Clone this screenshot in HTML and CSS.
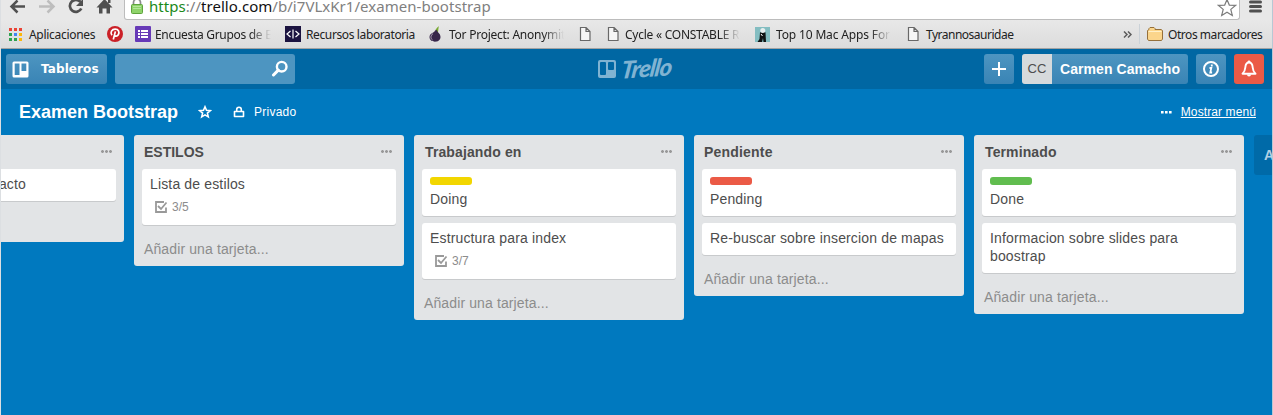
FILE: index.html
```html
<!DOCTYPE html>
<html lang="es">
<head>
<meta charset="utf-8">
<title>Examen Bootstrap | Trello</title>
<link rel="stylesheet" href="styles.css">
</head>
<body>
<div class="window">
  <div class="toolbar">
    <svg class="nav-icons" width="123" height="20" viewBox="0 0 123 20">
      <path d="M12.500 6.500h12.500M17.500 0.500l-6 6 6 6" fill="none" stroke="#505050" stroke-width="2.500"/>
      <path d="M39 6.500h14M47.500 0.500l6 6-6 6" fill="none" stroke="#bdbdbd" stroke-width="2.500"/>
      <path d="M80.500 2a6 6 0 1 0 .8 6.500" fill="none" stroke="#505050" stroke-width="2.700"/>
      <path d="M83 -1v7h-7z" fill="#505050"/>
      <path d="M104.500 -1l8 8.500h-2.500v6h-3.500v-5h-4v5h-3.500v-6h-2.500zM108 -1h2.500v4h-2.500z" fill="#505050"/>
    </svg>
    <div class="omnibox">
      <svg class="lock" width="12" height="14" viewBox="0 0 12 14">
        <path d="M2.500 5V2.500a3.500 3.500 0 0 1 7 0V5" fill="none" stroke="#8b8b8b" stroke-width="1.700"/>
        <rect x=".5" y="4.500" width="11" height="9" rx="1" fill="#8ed36a" stroke="#5fa33c"/>
        <path d="M2 6.500h8M2 8.500h8" stroke="#b4e79a"/>
      </svg>
      <div class="url"><span class="scheme">https</span>://<span class="host">trello.com</span>/b/i7VLxKr1/examen-bootstrap</div>
      <svg class="fav" width="20" height="18" viewBox="0 0 20 18">
        <path d="M10 .5l2.300 5.600 6.200.3-4.700 4 1.500 6L10 13.200 4.700 16.400l1.500-6-4.700-4 6.200-.3z" fill="#fff" stroke="#7c7c7c" stroke-width="1.200"/>
      </svg>
    </div>
    <svg class="menu" width="13" height="15" viewBox="0 0 13 15"><path d="M1.500 3h10M1.500 7.500h10M1.500 12h10" stroke="#505050" stroke-width="3" stroke-linecap="round"/></svg>
  </div>

  <div class="bookmarks">
    <div class="bm apps">
      <svg width="13" height="13" viewBox="0 0 13 13"><path d="M0 0h3v3H0zM5 0h3v3H5zM10 0h3v3h-3z" fill="#ea4335"/><path d="M0 5h3v3H0zM0 10h3v3H0zM5 10h3v3H5z" fill="#2da14f"/><path d="M5 5h3v3H5z" fill="#4285f4"/><path d="M10 5h3v3h-3zM10 10h3v3h-3z" fill="#fbb80a"/></svg>
      <span>Aplicaciones</span>
    </div>
    <div class="bm">
      <svg width="16" height="16" viewBox="0 0 16 16"><circle cx="8" cy="8" r="8" fill="#cb2027"/><path d="M4.900 9.200C2.700 6.300 5 3.200 8.100 3.200c3.500 0 4.700 3 3.200 5.500-1.200 2-3.200 1.600-3.700.3M8.400 5.400L6.300 13.500" fill="none" stroke="#fff" stroke-width="1.700"/></svg>
    </div>
    <div class="bm form">
      <svg width="16" height="16" viewBox="0 0 16 16"><rect width="16" height="16" rx="1" fill="#673ab7"/><path d="M3 4h2v2H3zM3 7h2v2H3zM3 10h2v2H3zM6 4h7v2H6zM6 7h7v2H6zM6 10h7v2H6z" fill="#fff"/></svg>
      <span class="clip w-form">Encuesta Grupos de Es</span>
    </div>
    <div class="bm rec">
      <svg width="16" height="16" viewBox="0 0 16 16"><path fill="#1b1340" d="M0 0h16v16H0z"/><path d="M5.500 5L2 8l3.500 3M10.500 5L14 8l-3.500 3M8 3.500v9" fill="none" stroke="#fff" stroke-width="1.200"/></svg>
      <span>Recursos laboratoria</span>
    </div>
    <div class="bm tor">
      <svg width="15" height="16" viewBox="0 0 15 16"><path d="M7.500 6C7 3 9 2 11 0c-.7 2-.6 4-1 6" fill="#78a832"/><path d="M7 4.500c0 2-5.500 2.500-5.500 6.500 0 3 2.500 4.700 5.500 4.700s5.500-1.700 5.500-4.700C12.500 7 9 6.500 9 4z" fill="#37264a"/><path d="M5 7.500c-2.500 2-2.800 4.800-.5 6.500" fill="none" stroke="#b2a8bb"/></svg>
      <span class="clip w-tor">Tor Project: Anonymity</span>
    </div>
    <div class="bm"><svg width="12" height="14" viewBox="0 0 12 14"><path d="M1.500.500h5.500l4 4v9h-9.500zM7 .5v4h4" fill="#f7f7f7" stroke="#686868" stroke-width="1.200"/></svg></div>
    <div class="bm cycle">
      <svg width="12" height="14" viewBox="0 0 12 14"><path d="M1.500.500h5.500l4 4v9h-9.500zM7 .5v4h4" fill="#f7f7f7" stroke="#686868" stroke-width="1.200"/></svg>
      <span class="clip w-cycle">Cycle « CONSTABLE RO</span>
    </div>
    <div class="bm mac">
      <svg width="15" height="15" viewBox="0 0 15 15"><path fill="#83bdc1" d="M0 0h15v15H0z"/><path d="M5 5.500c1.500-1.500 5-1.500 5.500 0L11 15H8.500l-.5-4-1 4H2.500l2-3z" fill="#101414"/><circle cx="7.800" cy="3.500" r="2.500" fill="#e6eeee"/><path d="M6 7l1.500 2" stroke="#fff"/></svg>
      <span class="clip w-mac">Top 10 Mac Apps For M</span>
    </div>
    <div class="bm tyr">
      <svg width="12" height="14" viewBox="0 0 12 14"><path d="M1.500.500h5.500l4 4v9h-9.500zM7 .5v4h4" fill="#f7f7f7" stroke="#686868" stroke-width="1.200"/></svg>
      <span>Tyrannosauridae</span>
    </div>
    <div class="bm"><svg width="9" height="7" viewBox="0 0 9 7"><path d="M1 .5l3 3-3 3M5 .5l3 3-3 3" fill="none" stroke="#5c5c5c" stroke-width="1.500"/></svg></div>
    <div class="bm others">
      <svg width="16" height="14" viewBox="0 0 16 14"><path d="M.5 12V3.500l1.500-1V1.500L3 .5h4l1 1v1h6l1.500 1V12l-1 1.500h-13z" fill="#fbd58b" stroke="#96703a"/><path d="M1.500 4.500h13" stroke="#fff0c8"/></svg>
      <span>Otros marcadores</span>
    </div>
  </div>

  <div class="header">
    <div class="side">
      <div class="btn boards">
        <svg width="17" height="17" viewBox="0 0 17 17"><path fill-rule="evenodd" d="M2 .5h13a1.500 1.500 0 0 1 1.500 1.500v13a1.500 1.500 0 0 1-1.500 1.500H2A1.500 1.500 0 0 1 .5 15V2A1.500 1.500 0 0 1 2 .5zM2.700 2.500v11.500h4.800V2.500zM9.500 2.500v7.500h4.800V2.500z" fill="#fff"/></svg>
        <span>Tableros</span>
      </div>
      <div class="search">
        <svg width="18" height="17" viewBox="0 0 18 17"><circle cx="10.700" cy="6.700" r="4.800" fill="none" stroke="#fff" stroke-width="2.400"/><path d="M7.300 10.100L2.500 15" stroke="#fff" stroke-width="3" stroke-linecap="round"/></svg>
      </div>
    </div>
    <div class="logo">
      <svg width="18" height="18" viewBox="0 0 18 18"><path fill-rule="evenodd" d="M2 0h14a2 2 0 0 1 2 2v14a2 2 0 0 1-2 2H2a2 2 0 0 1-2-2V2a2 2 0 0 1 2-2zM3 2a1 1 0 0 0-1 1v11a1 1 0 0 0 1 1h4a1 1 0 0 0 1-1V3a1 1 0 0 0-1-1zM11 2a1 1 0 0 0-1 1v6a1 1 0 0 0 1 1h4a1 1 0 0 0 1-1V3a1 1 0 0 0-1-1z" fill="#80b3d2"/></svg>
      <span class="wordmark">Trello</span>
    </div>
    <div class="side right">
      <div class="btn square"><svg width="16" height="16" viewBox="0 0 16 16"><path d="M8 1v14M1 8h14" stroke="#fff" stroke-width="2"/></svg></div>
      <div class="btn member"><span class="initials">CC</span><span class="name">Carmen Camacho</span></div>
      <div class="btn square"><svg width="18" height="18" viewBox="0 0 18 18"><circle cx="9" cy="9" r="7" fill="none" stroke="#fff" stroke-width="2"/><path d="M9.800 4.500v2M7.500 8h1.800l-1 4.500h1.800" fill="none" stroke="#fff" stroke-width="1.800"/></svg></div>
      <div class="btn square alert"><svg width="18" height="18" viewBox="0 0 18 18"><path d="M9 2.500C6.300 2.500 5.500 5 5.300 7.500 5.100 10.500 4.200 12.200 2.500 13.700h13c-1.700-1.500-2.600-3.200-2.800-6.200C12.500 5 11.700 2.500 9 2.500z" fill="none" stroke="#fff" stroke-width="1.900" stroke-linejoin="round"/><circle cx="9" cy="1.800" r="1.400" fill="#fff"/><path d="M7 14.500h4a2 2 0 0 1-4 0z" fill="#fff"/></svg></div>
    </div>
  </div>

  <div class="board-bar">
    <h1>Examen Bootstrap</h1>
    <svg class="star" width="14" height="14" viewBox="0 0 14 14"><path d="M7 1.800l1.500 3.500 3.900.3-3 2.500.9 3.800L7 9.900l-3.300 2 .9-3.800-3-2.500 3.900-.3z" fill="none" stroke="#fff" stroke-width="1.600"/></svg>
    <svg class="priv" width="12" height="12" viewBox="0 0 12 12"><path d="M1.500 5.500h9v5h-9zM3.700 5V3.500a2.300 2.300 0 0 1 4.600 0V5" fill="none" stroke="#fff" stroke-width="1.600" stroke-linejoin="round"/></svg>
    <span class="privacy">Privado</span>
    <svg class="more" width="11" height="3" viewBox="0 0 11 3"><path d="M0 0h2.600v2.600H0zM4 0h2.600v2.600H4zM8 0h2.600v2.600H8z" fill="#fff"/></svg>
    <span class="show">Mostrar menú</span>
  </div>

  <div class="lists">
    <section class="list">
      <header><h2></h2><i class="dots"></i></header>
      <div class="card tail">Formulario de contacto</div>
      <footer></footer>
    </section>
    <section class="list">
      <header><h2 class="caps">ESTILOS</h2><i class="dots"></i></header>
      <div class="card">Lista de estilos
        <div class="badge"><svg width="14" height="14" viewBox="0 0 14 14"><path d="M10 2H2v10h10V7.500" fill="none" stroke="#999" stroke-width="1.800"/><path d="M4 6l3 3 5.500-6.500" fill="none" stroke="#999" stroke-width="1.800"/></svg>3/5</div>
      </div>
      <footer>Añadir una tarjeta...</footer>
    </section>
    <section class="list">
      <header><h2 class="t1">Trabajando en</h2><i class="dots"></i></header>
      <div class="card labeled"><div class="label yellow"></div>Doing</div>
      <div class="card">Estructura para index
        <div class="badge"><svg width="14" height="14" viewBox="0 0 14 14"><path d="M10 2H2v10h10V7.500" fill="none" stroke="#999" stroke-width="1.800"/><path d="M4 6l3 3 5.500-6.500" fill="none" stroke="#999" stroke-width="1.800"/></svg>3/7</div>
      </div>
      <footer>Añadir una tarjeta...</footer>
    </section>
    <section class="list">
      <header><h2>Pendiente</h2><i class="dots"></i></header>
      <div class="card labeled"><div class="label red"></div>Pending</div>
      <div class="card">Re-buscar sobre insercion de mapas</div>
      <footer>Añadir una tarjeta...</footer>
    </section>
    <section class="list">
      <header><h2 class="t1">Terminado</h2><i class="dots"></i></header>
      <div class="card labeled"><div class="label green"></div>Done</div>
      <div class="card">Informacion sobre slides para boostrap</div>
      <footer>Añadir una tarjeta...</footer>
    </section>
    <div class="add-list">Añadir una lista...</div>
  </div>
</div>
</body>
</html>
```
FILE: styles.css
```css
* { box-sizing: border-box; }
html, body { margin: 0; height: 100%; overflow: hidden; }
body { font-family: "Liberation Sans", Arial, sans-serif; font-size: 14px; color: #4d4d4d; }
svg { display: block; flex: none; }
.window { height: 415px; display: flex; flex-direction: column; background: #0079bf; border-left: 1px solid #dcdfe2; border-right: 1px solid #b8c8d4; overflow: hidden; }

.toolbar { height: 20px; flex: none; display: flex; background: #e8e8e8; }
.nav-icons { margin-left: -1px; }
.omnibox { width: 1116px; margin-left: 1px; height: 20px; display: flex; background: #fff; border: 1px solid #bcbcbc; border-top: 0; border-radius: 0 0 3px 3px; font-family: "Noto Sans", "Open Sans", sans-serif; font-size: 15px; color: #808080; }
.lock { margin: 0 0 0 6px; }
.url { margin: -4px 0 0 6px; line-height: 20px; white-space: nowrap; letter-spacing: 0.04px; }
.scheme { color: #1a8a1a; }
.host { color: #111; }
.fav { margin: -1px 2px 0 auto; }
.menu { margin: -1px 0 0 9px; }

.bookmarks { height: 29px; flex: none; padding-left: 8px; display: grid; grid-template-columns: 98px 28px 150px 143px 151px 28px 148px 152px 216px 16px 1fr; align-items: center; background: linear-gradient(#e8e8e8, #dcdcdc); border-bottom: 1px solid #a3a3a3; font-family: "Noto Sans", "Open Sans", sans-serif; font-size: 12px; color: #222; }
.bm { display: flex; align-items: center; height: 28px; white-space: nowrap; letter-spacing: -0.3px; }
.bm svg + span { margin-left: 6px; }
.apps svg + span { margin-left: 7px; }
.form svg + span { margin-left: 4px; }
.rec svg + span { margin-left: 5px; }
.rec { letter-spacing: -0.4px; }
.rec span { letter-spacing: -0.38px; }
.rec, .tor, .cycle { letter-spacing: -0.25px; }
.mac { letter-spacing: -0.15px; }
.tyr svg + span { margin-left: 7px; }
.tyr { letter-spacing: -0.5px; }
.clip { overflow: hidden; -webkit-mask-image: linear-gradient(to right, #000 82%, transparent); mask-image: linear-gradient(to right, #000 82%, transparent); }
.w-form { width: 116px; }
.w-tor, .w-cycle, .w-mac { width: 115px; }
.others { height: 20px; padding-left: 7px; border-left: 1px solid #cbd2d8; letter-spacing: -0.45px; }
.others svg + span { margin-left: 5px; }

.header { height: 40px; flex: none; display: flex; padding: 5px 8px 5px 5px; background: #0067a3; }
.side { flex: 1; display: flex; gap: 8px; }
.right { justify-content: flex-end; }
.btn { height: 30px; display: flex; align-items: center; border-radius: 3px; background: linear-gradient(#4d95c1, #3984b5); color: #fff; font-weight: bold; overflow: hidden; }
.boards { width: 101px; padding-left: 6px; gap: 12px; }
.boards span { letter-spacing: 0.1px; font-family: "DejaVu Sans", sans-serif; font-size: 12px; }
.search { width: 180px; height: 30px; border-radius: 3px; background: #4d95c1; display: flex; justify-content: flex-end; padding: 6px 6px 0 0; }
.logo { display: flex; width: 75px; padding-top: 6px; gap: 5px; }
.wordmark { font: italic 900 24px/16px Lato, sans-serif; color: #80b3d2; transform: rotate(-4deg) skewX(-12deg); letter-spacing: -1px; }
.square { width: 30px; justify-content: center; }
.member { width: 166px; }
.initials { width: 30px; height: 30px; background: #d6dadc; color: #4d4d4d; font-weight: normal; line-height: 30px; font-size: 13px; text-align: center; }
.name { margin-left: 8px; letter-spacing: 0.07px; }
.alert { background: #eb5a46; }

.board-bar { height: 46px; flex: none; display: flex; align-items: center; padding: 0 16px 0 18px; color: #fff; font-size: 12px; letter-spacing: 0.1px; }
.board-bar h1 { margin: 0; font-size: 18px; width: 179px; white-space: nowrap; letter-spacing: 0; }
.priv { margin-left: 21px; }
.privacy { margin-left: 9px; letter-spacing: 0.25px; }
.more { margin-left: auto; margin-right: 9px; }
.show { text-decoration: underline; }

.lists { display: flex; align-items: flex-start; gap: 10px; margin-left: -147px; width: 1600px; }
.list { width: 270px; flex: none; border-radius: 3px; background: #e2e4e6; padding: 0 8px; }
.list header { height: 34px; display: flex; justify-content: space-between; padding: 0 4px 0 2px; }
.list h2 { margin: 0; font-size: 14px; line-height: 34px; letter-spacing: 0.2px; }
.list .caps { letter-spacing: 0; }
.list .t1 { padding-left: 1px; letter-spacing: 0.12px; }
.dots { width: 11px; height: 3px; margin-top: 15px; background: radial-gradient(circle at 1.500px 1.500px, #999 1.200px, transparent 1.600px) 0 0 / 4px 3px; }
.card { min-height: 32px; padding: 6px 8px 8px; line-height: 18px; background: #fff; border-radius: 3px; box-shadow: 0 1px 0 #c8cacc; letter-spacing: 0.15px; }
.card + .card { margin-top: 7px; }
.tail { text-align: right; padding-right: 90px; }
.label { width: 42px; height: 8px; border-radius: 3px; margin: 2px 0 5px; }
.labeled { height: 47px; }
.yellow { background: #f2d600; }
.red { background: #eb5a46; }
.green { background: #61bd4f; }
.badge { display: flex; align-items: center; gap: 4px; height: 18px; margin: 5px 0 1px 4px; font-size: 12px; letter-spacing: 0; color: #8c8c8c; }
.list footer { height: 41px; padding: 15px 2px 0; line-height: 18px; letter-spacing: 0.12px; color: #8c8c8c; }
.add-list { width: 270px; height: 40px; flex: none; padding-left: 10px; line-height: 40px; border-radius: 3px; background: #006aa8; color: #b0d0e5; font-weight: bold; }
```
